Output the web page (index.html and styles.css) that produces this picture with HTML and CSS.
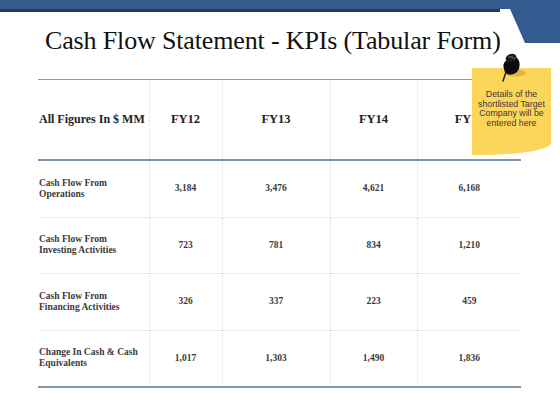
FILE: index.html
```html
<!DOCTYPE html>
<html>
<head>
<meta charset="utf-8">
<link rel="stylesheet" href="styles.css">
</head>
<body>
<div class="slide">
  <div class="topbar"></div>
  <svg class="corner" width="60" height="45" viewBox="0 0 60 45">
    <polygon points="0,0 60,0 60,43 25,43 10,9 0,9" fill="#355a8f"/>
  </svg>
  <h1 class="title">Cash Flow Statement - KPIs (Tabular Form)</h1>
  <table class="kpi">
    <colgroup>
      <col class="c0"><col class="c1"><col class="c2"><col class="c3"><col class="c4">
    </colgroup>
    <thead>
      <tr><th class="lab">All Figures In $ MM</th><th>FY12</th><th>FY13</th><th>FY14</th><th>FY15</th></tr>
    </thead>
    <tbody>
      <tr><td class="lab">Cash Flow From<br>Operations</td><td>3,184</td><td>3,476</td><td>4,621</td><td>6,168</td></tr>
      <tr><td class="lab">Cash Flow From<br>Investing Activities</td><td>723</td><td>781</td><td>834</td><td>1,210</td></tr>
      <tr><td class="lab">Cash Flow From<br>Financing Activities</td><td>326</td><td>337</td><td>223</td><td>459</td></tr>
      <tr><td class="lab">Change In Cash &amp; Cash<br>Equivalents</td><td>1,017</td><td>1,303</td><td>1,490</td><td>1,836</td></tr>
    </tbody>
  </table>
  <div class="note">
    <p class="note-text">Details of the shortlisted Target Company will be entered here</p>
  </div>
  <svg class="pin" width="28" height="32" viewBox="0 0 28 32">
    <ellipse cx="16" cy="21" rx="10" ry="3.5" fill="#c99a2e" opacity="0.55"/>
    <line x1="6" y1="20" x2="3" y2="29" stroke="#1a1a1a" stroke-width="1.4" stroke-linecap="round"/>
    <path d="M4,17 Q2,11 7,8 L12,5 Q17,4 19,9 Q21,15 17,20 Q12,24 7,22 Q4,20 4,17 Z" fill="#0d0d0d"/>
    <ellipse cx="11" cy="6" rx="5.5" ry="4" transform="rotate(-20 11 6)" fill="#1c1c1c"/>
    <path d="M9,5 Q12,4 15,7" stroke="#8a8a8a" stroke-width="0.9" fill="none"/>
  </svg>
</div>
</body>
</html>
```
FILE: styles.css
```css
html, body {
  margin: 0;
  padding: 0;
  background: #ffffff;
}
.slide {
  position: relative;
  width: 560px;
  height: 420px;
  overflow: hidden;
  background: #ffffff;
}
.topbar {
  height: 9px;
  background: #355a8f;
  border-bottom: 3px solid #2e3a4c;
  margin-right: 60px;
}
.corner {
  position: absolute;
  top: 0;
  right: 0;
}
.title {
  margin: 14px 0 0 45px;
  font-family: "Liberation Serif", serif;
  font-weight: normal;
  font-size: 26px;
  line-height: 30px;
  color: #111111;
  letter-spacing: -0.15px;
}
.kpi {
  margin: 23px 0 0 38px;
  width: 483px;
  border-collapse: collapse;
  table-layout: fixed;
  font-family: "Liberation Serif", serif;
  font-weight: bold;
  color: #3a3a3a;
}
.c0 { width: 111px; }
.c1 { width: 73px; }
.c2 { width: 108px; }
.c3 { width: 87px; }
.c4 { width: 104px; }
.kpi thead tr {
  border-top: 1px solid #8a9bb0;
  border-bottom: 2px solid #8094aa;
}
.kpi th {
  height: 79px;
  padding: 0;
  font-size: 12.5px;
  color: #222222;
  text-align: center;
  white-space: nowrap;
  border-left: 1px dotted #dcdcdc;
}
.kpi td {
  height: 55.5px;
  padding: 0;
  font-size: 9.5px;
  line-height: 11px;
  text-align: center;
  border-left: 1px dotted #dcdcdc;
  border-top: 1px dotted #dcdcdc;
}
.kpi tbody tr:first-child td { border-top: none; }
.kpi tbody tr:last-child { border-bottom: 2px solid #8094aa; }
.kpi .lab {
  text-align: left;
  padding-left: 1px;
  border-left: none;
}
.kpi th.lab { font-size: 12px; }
.note {
  position: absolute;
  left: 472px;
  top: 68px;
  width: 79px;
  height: 87px;
  background: #fcd55b;
  border-bottom-right-radius: 70px 12px;
  display: flex;
  justify-content: center;
}
.note-text {
  margin: 22px 0 0 0;
  width: 76px;
  font-family: "Liberation Sans", sans-serif;
  font-size: 8.8px;
  line-height: 9.6px;
  color: #3a3a3a;
  text-align: center;
}
.pin {
  position: absolute;
  left: 500px;
  top: 52px;
}
```
